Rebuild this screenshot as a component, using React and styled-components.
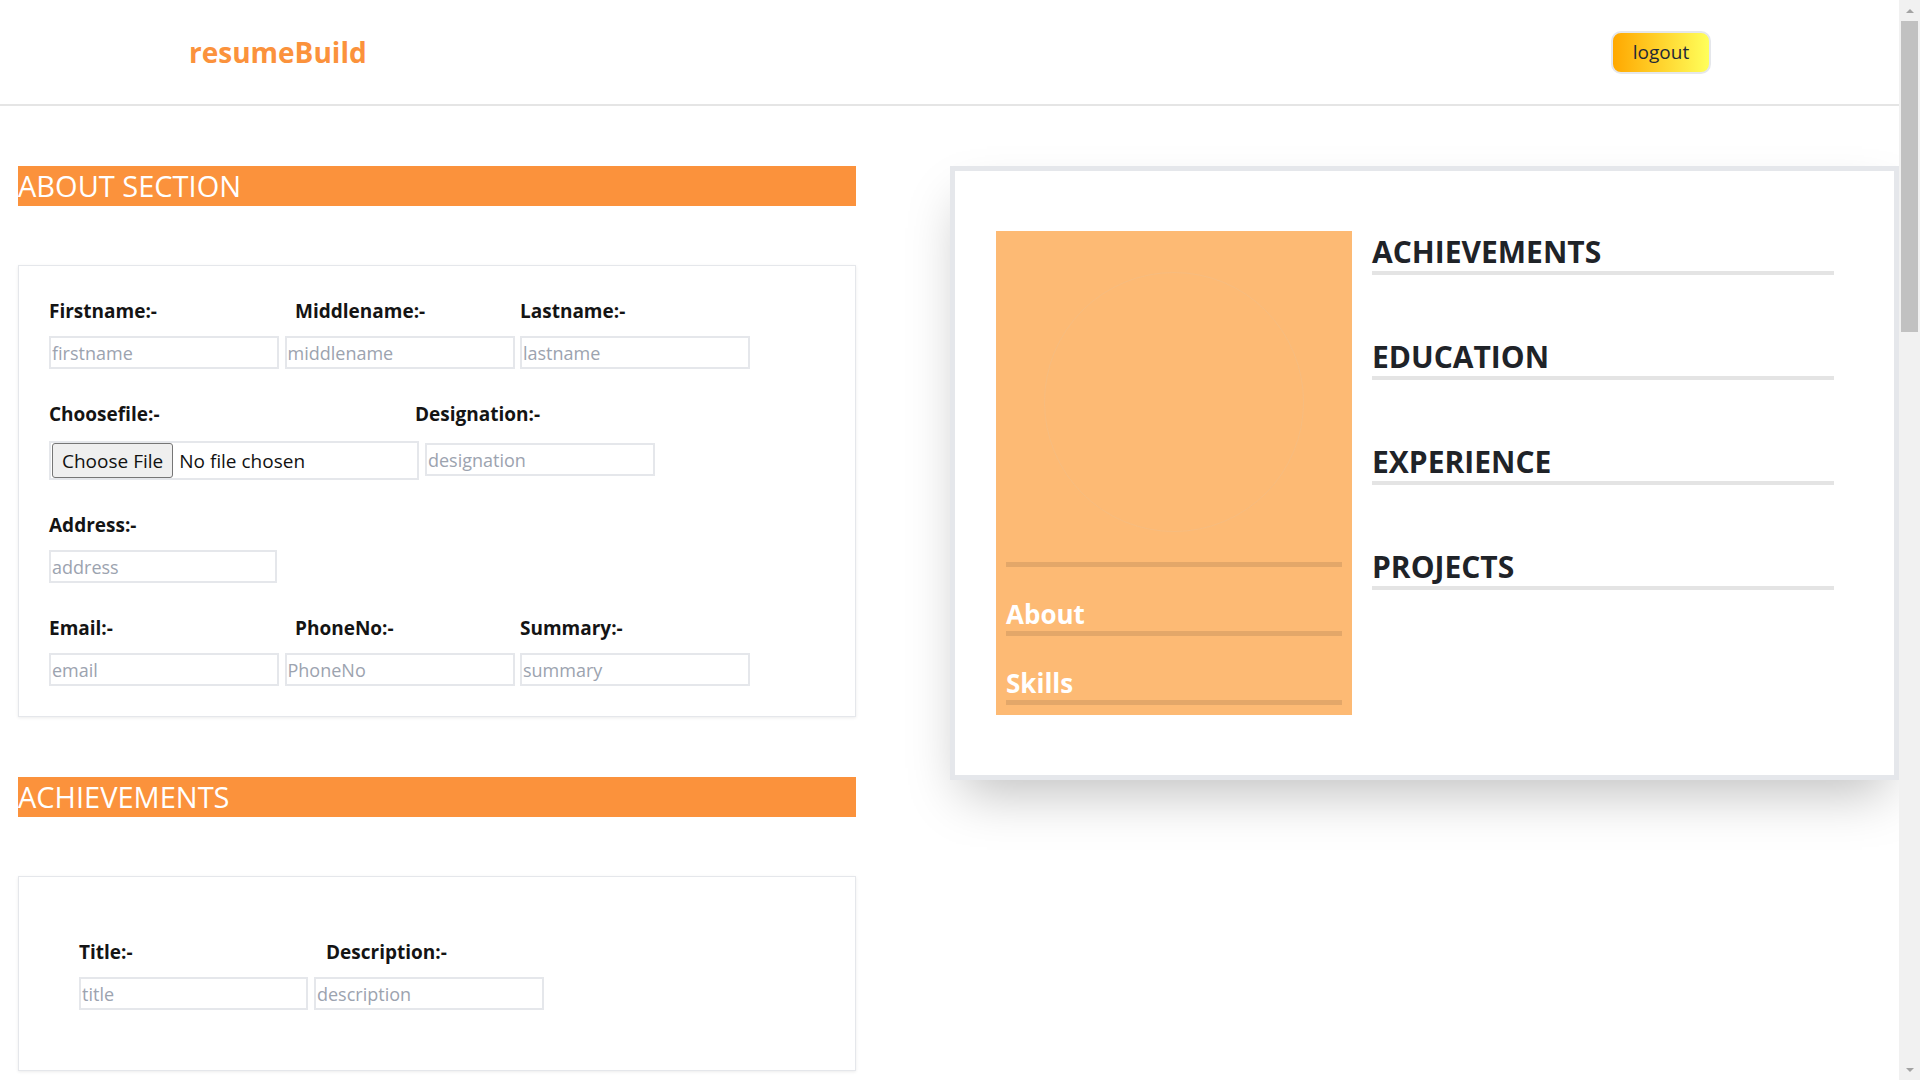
import styled, { createGlobalStyle } from 'styled-components';

const GlobalStyle = createGlobalStyle`
  body {
    margin: 0;
    font-family: "Open Sans", "Noto Sans", sans-serif;
    background: #fff;
    color: #111;
  }
  * {
    box-sizing: border-box;
  }
`;

const Shell = styled.div`
  display: flex;
  align-items: flex-start;
`;

const Page = styled.div`
  flex: 1;
  min-width: 0;
`;

/* window scrollbar, as it shows in the screenshot */
const ScrollTrack = styled.div`
  position: sticky;
  top: 0;
  flex: 0 0 21px;
  height: 100vh;
  background: #f1f1f1;
  display: flex;
  flex-direction: column;
  align-items: center;
`;

const ScrollArrow = styled.div`
  flex: 0 0 21px;
  display: flex;
  align-items: center;
  justify-content: center;
  &::before {
    content: '';
    border-left: 4px solid transparent;
    border-right: 4px solid transparent;
    ${(p) => (p.$down ? 'border-top: 4px solid #a3a3a3;' : 'border-bottom: 4px solid #a3a3a3;')}
  }
`;

const ScrollThumb = styled.div`
  width: 17px;
  height: 311px;
  background: #c1c1c1;
`;

const ScrollRest = styled.div`
  flex: 1;
`;

const Header = styled.header`
  display: flex;
  justify-content: space-between;
  align-items: center;
  height: 106px;
  padding: 0 188px 0 189px;
  border-bottom: 2px solid #e5e5e5;
`;

const Logo = styled.h1`
  margin: 0;
  font-size: 28px;
  font-weight: 700;
  color: #fb923c;
`;

const LogoutButton = styled.button`
  width: 100px;
  height: 43px;
  border: 2px solid #e5e7eb;
  border-radius: 10px;
  background: linear-gradient(90deg, #ffa800, #ffff5b);
  font-family: inherit;
  font-size: 19px;
  color: #1f2937;
  cursor: pointer;
`;

const Main = styled.main`
  display: grid;
  grid-template-columns: 950px 1fr;
  align-items: start;
  margin-top: 60px;
  padding-bottom: 60px;
`;

const FormColumn = styled.div`
  padding-left: 18px;
  width: 856px;
`;

const SectionBar = styled.h2`
  margin: 0;
  height: 40px;
  line-height: 40px;
  background: #fb923c;
  color: #fff;
  font-size: 29px;
  font-weight: 400;
  & + * {
    margin-top: 59px;
  }
`;

const FormCard = styled.div`
  border: 1px solid #e5e7eb;
  box-shadow: 0 1px 3px rgba(0, 0, 0, 0.08);
  padding: ${(p) => p.$pad};
  display: flex;
  flex-direction: column;
  gap: 32px;
  margin-bottom: 60px;
`;

const FieldGroup = styled.div`
  display: flex;
  flex-direction: column;
  gap: 12px;
`;

const LabelRow = styled.div`
  display: grid;
  grid-template-columns: ${(p) => p.$cols};
`;

const Label = styled.label`
  font-size: 19px;
  line-height: 26px;
  font-weight: 700;
  color: #141414;
`;

const InputRow = styled.div`
  display: flex;
  align-items: center;
  gap: ${(p) => p.$gap || '5.5px'};
`;

const TextInput = styled.input`
  width: ${(p) => p.$w || '230px'};
  height: 33px;
  border: 2px solid #e5e7eb;
  padding: 0 1px;
  font-family: inherit;
  font-size: 18px;
  color: #111;
  outline: none;
  &::placeholder {
    color: #9ca3af;
  }
`;

const FileInput = styled.input.attrs({ type: 'file' })`
  width: 370px;
  height: 39px;
  margin-top: 2px;
  padding: 0;
  border: 2px solid #e5e7eb;
  font-family: inherit;
  font-size: 19px;
  color: #111;
  &::file-selector-button {
    height: 35px;
    margin: 0 6px 0 1px;
    padding: 0 9px;
    background: #efefef;
    border: 1px solid #767676;
    border-radius: 3px;
    font-family: inherit;
    font-size: 19px;
    color: #111;
  }
`;

const SubmitButton = styled.button`
  width: 160px;
  height: 44px;
  border: none;
  background: #fb923c;
  color: #fff;
  font-family: inherit;
  font-size: 20px;
`;

/* preview */

const PreviewCard = styled.div`
  border: 5px solid #e5e7eb;
  background: #fff;
  box-shadow: 0 25px 50px -12px rgba(0, 0, 0, 0.25);
  padding: 60px 0 60px 41px;
  display: flex;
  gap: 20px;
  align-items: flex-start;
`;

const Sidebar = styled.aside`
  width: 356px;
  background: #fdba74;
  padding: 0 10px 10px;
`;

const PhotoBox = styled.div`
  display: flex;
  justify-content: center;
  padding: 41px 0 30px;
  border-bottom: 5px solid #e3a769;
`;

const Photo = styled.div`
  width: 260px;
  height: 260px;
  border-radius: 50%;
  border: 1px solid rgba(190, 205, 225, 0.1);
`;

const SideTitle = styled.h3`
  margin: 32px 0 0;
  font-size: 26px;
  line-height: 31px;
  font-weight: 700;
  color: #fff;
  padding-bottom: 1px;
  border-bottom: 5px solid #e3a769;
`;

const PreviewMain = styled.div`
  width: 462px;
  padding-top: 3px;
  display: flex;
  flex-direction: column;
  gap: 64px;
`;

const PreviewHeading = styled.h2`
  margin: 0;
  font-size: 30px;
  line-height: 36px;
  font-weight: 700;
  color: #1f2328;
  padding-bottom: 1px;
  border-bottom: 4px solid #e4e4e4;
`;

const extraSections = [
  { title: 'EDUCATION', labels: ['Institute:-', 'Degree:-', 'Year:-'], fields: ['institute', 'degree', 'year'] },
  { title: 'EXPERIENCE', labels: ['Company:-', 'Role:-', 'Duration:-'], fields: ['company', 'role', 'duration'] },
  { title: 'PROJECTS', labels: ['Title:-', 'Description:-'], fields: ['title', 'description'] },
  { title: 'SKILLS', labels: ['Skill:-'], fields: ['skill'] },
];

export default function App() {
  return (
    <Shell>
      <GlobalStyle />
      <Page>
        <Header>
          <Logo>resumeBuild</Logo>
          <LogoutButton>logout</LogoutButton>
        </Header>
        <Main>
          <FormColumn>
            <SectionBar>ABOUT SECTION</SectionBar>
            <FormCard $pad="32px 30px 30px">
              <FieldGroup>
                <LabelRow $cols="246px 225px auto">
                  <Label>Firstname:-</Label>
                  <Label>Middlename:-</Label>
                  <Label>Lastname:-</Label>
                </LabelRow>
                <InputRow>
                  <TextInput placeholder="firstname" />
                  <TextInput placeholder="middlename" />
                  <TextInput placeholder="lastname" />
                </InputRow>
              </FieldGroup>
              <FieldGroup>
                <LabelRow $cols="366px auto">
                  <Label>Choosefile:-</Label>
                  <Label>Designation:-</Label>
                </LabelRow>
                <InputRow $gap="6px">
                  <FileInput />
                  <TextInput placeholder="designation" />
                </InputRow>
              </FieldGroup>
              <FieldGroup>
                <LabelRow $cols="auto">
                  <Label>Address:-</Label>
                </LabelRow>
                <InputRow>
                  <TextInput placeholder="address" $w="228px" />
                </InputRow>
              </FieldGroup>
              <FieldGroup>
                <LabelRow $cols="246px 225px auto">
                  <Label>Email:-</Label>
                  <Label>PhoneNo:-</Label>
                  <Label>Summary:-</Label>
                </LabelRow>
                <InputRow>
                  <TextInput placeholder="email" />
                  <TextInput placeholder="PhoneNo" />
                  <TextInput placeholder="summary" />
                </InputRow>
              </FieldGroup>
            </FormCard>

            <SectionBar>ACHIEVEMENTS</SectionBar>
            <FormCard $pad="62px 60px 60px">
              <FieldGroup>
                <LabelRow $cols="247px auto">
                  <Label>Title:-</Label>
                  <Label>Description:-</Label>
                </LabelRow>
                <InputRow $gap="6px">
                  <TextInput placeholder="title" $w="229px" />
                  <TextInput placeholder="description" />
                </InputRow>
              </FieldGroup>
            </FormCard>

            {extraSections.map((s) => (
              <div key={s.title}>
                <SectionBar>{s.title}</SectionBar>
                <FormCard $pad="62px 60px 60px">
                  <FieldGroup>
                    <LabelRow $cols={s.labels.map(() => '236px').join(' ')}>
                      {s.labels.map((l) => (
                        <Label key={l}>{l}</Label>
                      ))}
                    </LabelRow>
                    <InputRow $gap="6px">
                      {s.fields.map((f) => (
                        <TextInput key={f} placeholder={f} />
                      ))}
                    </InputRow>
                  </FieldGroup>
                </FormCard>
              </div>
            ))}
            <SubmitButton>submit</SubmitButton>
          </FormColumn>

          <PreviewCard>
            <Sidebar>
              <PhotoBox>
                <Photo />
              </PhotoBox>
              <SideTitle>About</SideTitle>
              <SideTitle>Skills</SideTitle>
            </Sidebar>
            <PreviewMain>
              <PreviewHeading>ACHIEVEMENTS</PreviewHeading>
              <PreviewHeading>EDUCATION</PreviewHeading>
              <PreviewHeading>EXPERIENCE</PreviewHeading>
              <PreviewHeading>PROJECTS</PreviewHeading>
            </PreviewMain>
          </PreviewCard>
        </Main>
      </Page>
      <ScrollTrack>
        <ScrollArrow />
        <ScrollThumb />
        <ScrollRest />
        <ScrollArrow $down />
      </ScrollTrack>
    </Shell>
  );
}
